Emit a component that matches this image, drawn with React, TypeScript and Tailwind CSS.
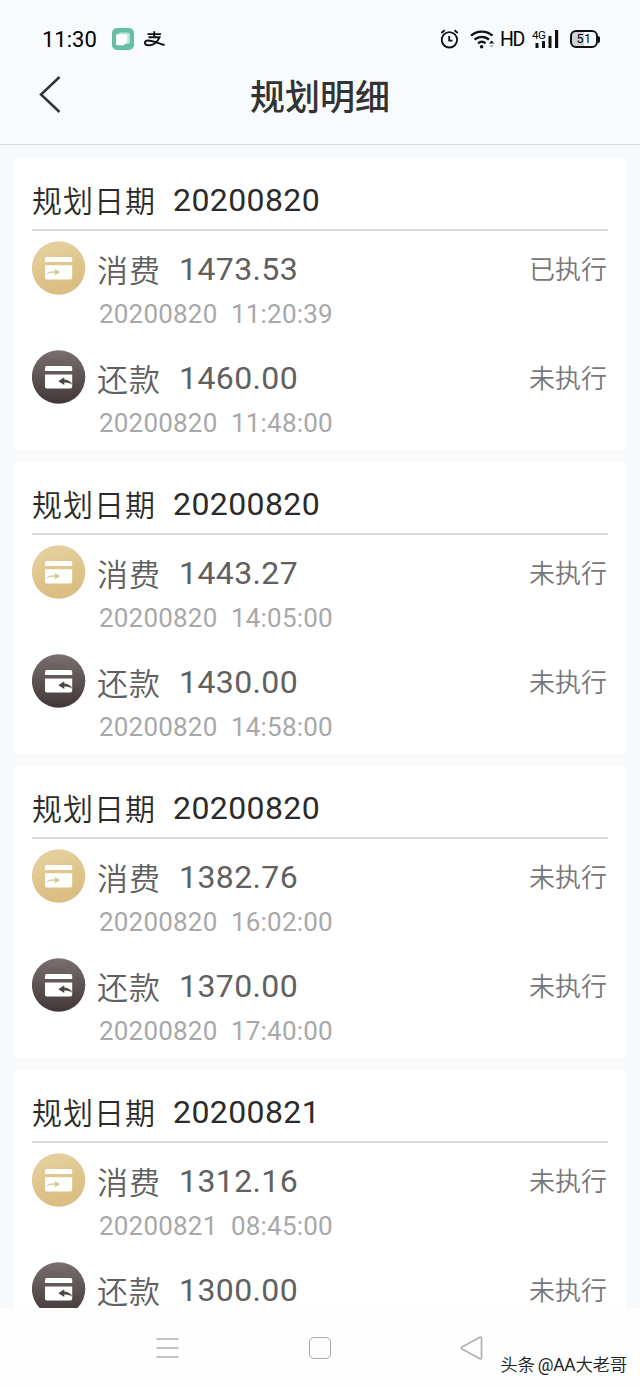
import React from "react";

type Entry = { kind: "spend" | "repay"; amount: string; date?: string; time?: string; status: string };
type Plan = { date: string; entries: Entry[] };

const plans: Plan[] = [
  {
    date: "20200820",
    entries: [
      { kind: "spend", amount: "1473.53", date: "20200820", time: "11:20:39", status: "已执行" },
      { kind: "repay", amount: "1460.00", date: "20200820", time: "11:48:00", status: "未执行" },
    ],
  },
  {
    date: "20200820",
    entries: [
      { kind: "spend", amount: "1443.27", date: "20200820", time: "14:05:00", status: "未执行" },
      { kind: "repay", amount: "1430.00", date: "20200820", time: "14:58:00", status: "未执行" },
    ],
  },
  {
    date: "20200820",
    entries: [
      { kind: "spend", amount: "1382.76", date: "20200820", time: "16:02:00", status: "未执行" },
      { kind: "repay", amount: "1370.00", date: "20200820", time: "17:40:00", status: "未执行" },
    ],
  },
  {
    date: "20200821",
    entries: [
      { kind: "spend", amount: "1312.16", date: "20200821", time: "08:45:00", status: "未执行" },
      { kind: "repay", amount: "1300.00", status: "未执行" },
    ],
  },
];

function SpendIcon() {
  return (
    <svg className="block size-[54px] shrink-0" viewBox="0 0 54 54">
      <defs>
        <linearGradient id="gold" x1="0" y1="0" x2="0.3" y2="1">
          <stop offset="0" stopColor="#e6d2a2" />
          <stop offset="1" stopColor="#dabd80" />
        </linearGradient>
      </defs>
      <circle cx="26.600" cy="27" r="26.700" fill="url(#gold)" />
      <path d="M14.800 16h23.600a1.800 1.800 0 0 1 1.800 1.800V21H13v-3.200A1.800 1.800 0 0 1 14.800 16Z" fill="#fff" />
      <path d="M13 24.200h27.200v12.600a1.800 1.800 0 0 1-1.800 1.800H14.800a1.800 1.800 0 0 1-1.800-1.800Z" fill="#fff" />
      <path d="M14 33.800c2-3 5.500-3.700 9-3.400v-2.500l5 3.400-5 2.900v-2.300c-3.500-.2-6.500.3-9 1.900Z" fill="#d6c590" />
    </svg>
  );
}

function RepayIcon() {
  return (
    <svg className="block size-[54px] shrink-0" viewBox="0 0 54 54">
      <defs>
        <linearGradient id="brown" x1="0" y1="0" x2="0" y2="1">
          <stop offset="0" stopColor="#7a6f6f" />
          <stop offset="1" stopColor="#423637" />
        </linearGradient>
      </defs>
      <circle cx="26.600" cy="27" r="26.700" fill="url(#brown)" />
      <path d="M14.800 16h23.600a1.800 1.800 0 0 1 1.800 1.800V21H13v-3.200A1.800 1.800 0 0 1 14.800 16Z" fill="#fff" />
      <path d="M13 24.600h27.200v12.200a1.800 1.800 0 0 1-1.800 1.800H14.800a1.800 1.800 0 0 1-1.800-1.800Z" fill="#fff" />
      <path d="M26.300 31.200l6-3.900v2.300c4 .3 6.600 2.100 8 5.100-2.500-1.800-4.800-2.400-8-2.200v2.500Z" fill="#4f4445" />
    </svg>
  );
}

function StatusBar() {
  return (
    <div className="flex h-[78px] items-center pl-[42px] pr-[40px] text-black">
      <span className="w-[56px] whitespace-nowrap pt-[2px] text-[22px] leading-none">11:30</span>
      <svg className="ml-[14px] size-[22px]" viewBox="0 0 22 22">
        <rect width="22" height="22" rx="5" fill="#65bfa4" />
        <rect x="6.500" y="4.500" width="11.500" height="11.500" rx="2" fill="#b9e5d8" />
        <path d="M5.300 6.300h8.500a1.500 1.500 0 0 1 1.500 1.500v6l-3.500 3.500H5.300A1.300 1.300 0 0 1 4 16V7.600a1.300 1.300 0 0 1 1.300-1.300Z" fill="#fff" />
      </svg>
      <svg className="ml-[10px] h-[16px] w-[21px]" viewBox="0 0 21 16" fill="none" stroke="#111" strokeWidth="1.900">
        <path d="M3.500 3.100h13.500M10.200 .3v6M4.500 6.300h11c-1.500 3.400-4.800 8-11 8-4.700 0-4.700-4.800-.5-4.800 4.800 0 10 2.600 16.500 4.500" />
      </svg>
      <div className="ml-auto flex items-center">
        <svg className="-ml-px h-[20px] w-[19px]" viewBox="0 0 19 20" fill="none" stroke="#111" strokeWidth="1.800">
          <circle cx="8.400" cy="10.800" r="7.700" />
          <path d="M8.200 7v4.600h3.300M.3 4l3.300-2.700M16.800 4l-3.300-2.700" />
        </svg>
        <svg className="ml-[10px] h-[19px] w-[25px]" viewBox="0 0 25 19" fill="none" stroke="#111" strokeWidth="2.300">
          <path d="M1 5.700c6-5.500 15.500-5.500 21.500 0M4.500 9.700c4.200-3.800 10.500-3.800 14.500 0M8 13.400c2.300-1.900 5.300-1.900 7.500 0" />
          <circle cx="11.600" cy="16.700" r="1.800" fill="#111" stroke="none" />
          <path d="M19 13.600l2.600-3.200 2.600 3.200Z" fill="#111" stroke="none" />
          <path d="M19 15l2.600 2.800 2.600-2.800Z" fill="#bbb" stroke="none" />
        </svg>
        <span className="ml-[5px] w-[24px] whitespace-nowrap pt-[2px] text-[19.500px] leading-none tracking-[-1.500px]">HD</span>
        <div className="relative ml-[8px] h-[18px] w-[27px]">
          <svg className="block h-[18px] w-[27px]" viewBox="0 0 27 18" fill="#111">
            <rect x="3.500" y="13" width="3" height="5" />
            <rect x="10" y="11" width="3" height="7" />
            <rect x="16.500" y="6" width="3" height="12" />
            <rect x="23" y="0" width="3.200" height="18" />
          </svg>
          <span className="absolute left-0 top-0 whitespace-nowrap text-[11.500px] leading-[11px] tracking-[-0.500px]">4G</span>
        </div>
        <div className="ml-[11px] flex items-center">
          <div className="flex h-[18px] w-[28px] items-center justify-center rounded-[6px] border-2 border-[#111] bg-linear-to-r from-[#cfd1d3] from-50% to-[#f7fbfe] to-50% text-[12.500px] leading-none tracking-[0.500px]">
            51
          </div>
          <div className="h-[7px] w-[2px] rounded-r bg-[#111]" />
        </div>
      </div>
    </div>
  );
}

function EntryRow({ entry }: { entry: Entry }) {
  const spend = entry.kind === "spend";
  return (
    <div className="flex h-[109px] items-start pt-[10px]">
      {spend ? <SpendIcon /> : <RepayIcon />}
      <div className="ml-[11px] whitespace-nowrap pt-px">
        <div className="flex h-[56px] items-center text-[#606060]">
          <span className="w-[82px] pt-[3px] text-[31px] font-[350] leading-[42px] tracking-[1px]">{spend ? "消费" : "还款"}</span>
          <span className="pb-[2px] text-[32px] tracking-[0.400px]">{entry.amount}</span>
        </div>
        {entry.date && (
          <div className="flex h-[32px] items-center pl-[2px] text-[26px] text-[#a8a8a8]">
            <span className="w-[132px] tracking-[0.200px]">{entry.date}</span>
            <span className="tracking-[0.200px]">{entry.time}</span>
          </div>
        )}
      </div>
      <span className="ml-auto mr-px flex h-[57px] items-center whitespace-nowrap pt-px text-[26px] font-[350] text-[#77777c]">
        {entry.status}
      </span>
    </div>
  );
}

function PlanCard({ plan }: { plan: Plan }) {
  return (
    <section className="h-[291px] shrink-0 rounded-[4px] bg-white px-[18px]">
      <div className="flex h-[73px] items-center whitespace-nowrap border-b-2 border-[#d9d9d9] pt-[14px] text-[#2b2b2b]">
        <span className="w-[141px] pt-[2px] text-[30px] font-[350] tracking-[1px]">规划日期</span>
        <span className="pb-[2px] text-[32px] tracking-[0.400px]">{plan.date}</span>
      </div>
      {plan.entries.map((entry) => (
        <EntryRow key={entry.kind} entry={entry} />
      ))}
    </section>
  );
}

export default function App() {
  return (
    <div className="flex h-[1387px] w-[640px] flex-col overflow-hidden bg-[#f7fafd] font-['Roboto','Noto_Sans_CJK_SC_DemiLight','Noto_Sans_CJK_SC',sans-serif]">
      <header className="h-[145px] shrink-0 border-b border-[#d9dee0] bg-[#f7fbfe]">
        <StatusBar />
        <div className="grid h-[36px] grid-cols-[1fr_auto_1fr] items-center">
          <svg className="-mt-[3px] ml-[39px] h-[37px] w-[22px]" viewBox="0 0 22 37" fill="none" stroke="#333" strokeWidth="2.500">
            <path d="M20.500 1L2 18.500l18.500 17.500" />
          </svg>
          <h1 className="-mt-[3px] font-['Noto_Sans_CJK_SC',sans-serif] text-[35px] font-medium leading-none text-[#333]">规划明细</h1>
        </div>
      </header>
      <main className="min-h-0 flex-1 overflow-hidden px-[14px] pt-[13px]">
        <div className="flex flex-col gap-[13px] bg-[#f9fafb]">
          {plans.map((plan, i) => (
            <PlanCard key={i} plan={plan} />
          ))}
        </div>
      </main>
      <nav className="relative h-[79px] shrink-0 bg-[#fefefe]">
        <div className="grid h-full grid-cols-[152px_152px_152px] items-center justify-center justify-items-center">
          <svg className="h-[22px] w-[24px]" viewBox="0 0 24 22" stroke="#b0b0b0" strokeWidth="1.500">
            <path d="M.5 2h22M.5 11h22M.5 20h22" />
          </svg>
          <div className="size-[22px] rounded-[5px] border-[1.500px] border-[#a8a8a8]" />
          <svg className="h-[26px] w-[24px]" viewBox="0 0 24 26" fill="none" stroke="#b0b0b0" strokeWidth="1.700" strokeLinejoin="round">
            <path d="M20 2.200Q21.500 1.500 21.500 3.300V22.700Q21.500 24.500 20 23.800L2 14Q.5 13 2 12Z" />
          </svg>
        </div>
        <span className="absolute bottom-[13px] right-[13px] whitespace-nowrap text-[17.500px] leading-none tracking-[-0.300px] text-[#222] [word-spacing:-1px]">头条 @AA大老哥</span>
      </nav>
    </div>
  );
}
